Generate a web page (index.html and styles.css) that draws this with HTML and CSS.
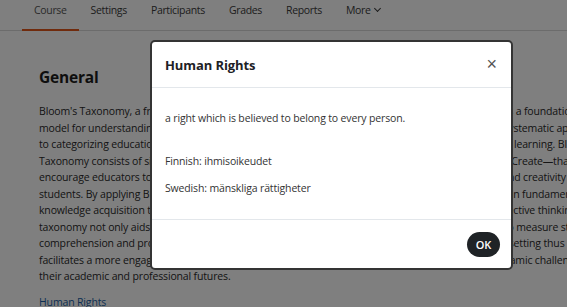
FILE: index.html
```html
<!DOCTYPE html>
<html lang="en">
<head>
  <meta charset="UTF-8" />
  <meta name="viewport" content="width=device-width, initial-scale=1.0"/>
  <title>Course: General</title>
  <link rel="stylesheet" href="styles.css">
</head>
<body>

  <nav class="tabs">
    <a class="tab active" href="#">Course</a>
    <a class="tab" href="#">Settings</a>
    <a class="tab" href="#">Participants</a>
    <a class="tab" href="#">Grades</a>
    <a class="tab" href="#">Reports</a>
    <a class="tab" href="#">More <span class="caret"></span></a>
  </nav>

  <main class="content">
    <h3 class="section-title">General</h3>
    <p class="summary">
      Bloom's Taxonomy, a framework developed by Benjamin S. Bloom and colleagues in 1956, serves as a foundational<br>
      model for understanding and structuring learning objectives in higher education, offering tutors a systematic approach<br>
      to categorizing educational goals and objectives, guiding the planning and assessment of all student learning. Bloom's<br>
      Taxonomy consists of six cognitive levels&nbsp;&nbsp; — Remember, Understand, Apply, Analyze, Evaluate, and Create—that<br>
      encourage educators to design learning activities and exercises which foster deep critical thinking and creativity in<br>
      students. By applying Bloom's framework, teachers can help to move learners beyond simple recall in fundamental<br>
      knowledge acquisition towards the deeper levels of analysis, synthesis, creative, evaluation and reflective thinking. The<br>
      taxonomy not only aids in the writing of clear and measurable objectives but also helps educators to measure student<br>
      comprehension and progress across cognitive levels through clear assessment, feedback, and goal-setting thus<br>
      facilitates a more engaging and meaningful learning environment that prepares all students for dynamic challenges in<br>
      their academic and professional futures.
    </p>
    <a class="glossary-link" href="#">Human Rights</a>
  </main>

  <div class="backdrop"></div>

  <div class="modal">
    <div class="modal-header">
      <h5 class="modal-title">Human Rights</h5>
      <button class="close">&times;</button>
    </div>
    <div class="modal-body">
      <p class="definition">a right which is believed to belong to every person.</p>
      <p>Finnish: ihmisoikeudet</p>
      <p>Swedish: mänskliga rättigheter</p>
    </div>
    <div class="modal-footer">
      <button class="btn-ok">OK</button>
    </div>
  </div>

</body>
</html>
```

FILE: styles.css
```css
body {
  margin: 0;
  font-family: "Open Sans", "Noto Sans", sans-serif;
  font-size: 10.5px;
  letter-spacing: -0.15px;
  color: #2a2a2a;
  background: #ffffff;
  overflow: hidden;
}
.tabs {
  display: flex;
  padding-left: 22px;
  height: 30px;
  border-bottom: 1px solid #d8d8d8;
}
.tab {
  display: flex;
  align-items: center;
  padding: 0 12px 10px;
  color: #3a3a3a;
  letter-spacing: -0.33px;
  text-decoration: none;
  border-bottom: 2px solid transparent;
  margin-bottom: -1px;
}
.tab.active {
  color: #555;
  border-bottom-color: #e0571a;
}
.caret {
  display: inline-block;
  width: 4px;
  height: 4px;
  margin-left: 4px;
  margin-top: -3px;
  border-right: 1.3px solid #3a3a3a;
  border-bottom: 1.3px solid #3a3a3a;
  transform: rotate(45deg);
}
.content {
  padding: 0 39px;
}
.section-title {
  font-size: 15.5px;
  font-weight: 700;
  letter-spacing: -0.2px;
  margin: 35px 0 15px;
  color: #1d1d1d;
}
.summary {
  margin: 0 0 10px;
  line-height: 16.5px;
  white-space: nowrap;
}
.glossary-link {
  color: #1a5fa6;
  text-decoration: none;
}
.backdrop {
  position: fixed;
  inset: 0;
  background: rgba(0, 0, 0, 0.5);
}
.modal {
  position: absolute;
  left: 150px;
  top: 40px;
  width: 359px;
  height: 226px;
  display: flex;
  flex-direction: column;
  background: #fff;
  border: 2px solid #343434;
  border-radius: 5px;
}
.modal-header {
  display: flex;
  align-items: center;
  justify-content: space-between;
  height: 45px;
  padding: 0 14px 0 13px;
  border-bottom: 1px solid #e3e7eb;
}
.modal-title {
  margin: 0;
  font-size: 13px;
  font-weight: 700;
  letter-spacing: -0.1px;
  color: #1d2125;
}
.close {
  border: none;
  background: none;
  font-size: 18px;
  color: #555;
  padding: 0;
  cursor: pointer;
}
.modal-body {
  flex: 1;
  padding: 23px 13px 0;
  color: #333;
}
.modal-body p {
  margin: 0 0 13px;
}
.modal-body .definition {
  margin-bottom: 29px;
}
.modal-footer {
  display: flex;
  justify-content: flex-end;
  align-items: center;
  height: 48px;
  padding-right: 11px;
  border-top: 1px solid #e3e7eb;
}
.btn-ok {
  width: 33px;
  height: 25px;
  border: none;
  border-radius: 13px;
  background: #1f2326;
  color: #fff;
  font-family: inherit;
  font-size: 11px;
  font-weight: 600;
  padding: 0;
}
```
